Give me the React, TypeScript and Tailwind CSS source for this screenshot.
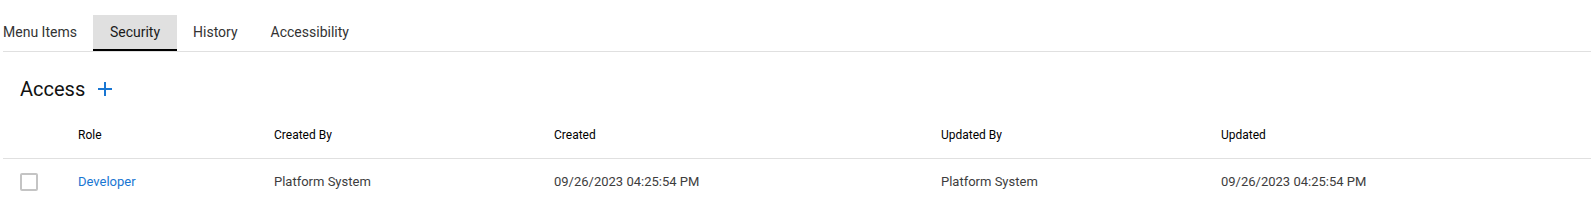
import React from "react";

const tabs = ["Menu Items", "Security", "History", "Accessibility"];

function PlusIcon() {
  return (
    <svg width="24" height="24" viewBox="0 0 24 24" className="fill-[#1976d2]">
      <path d="M19 13h-6v6h-2v-6H5v-2h6V5h2v6h6v2z" />
    </svg>
  );
}

export default function App() {
  return (
    <div
      className="w-[1595px] h-[212px] overflow-hidden bg-white pl-[3px] pr-[4px]"
      style={{ fontFamily: "Roboto, 'Liberation Sans', sans-serif" }}
    >
      <div className="pt-[15px]">
        <div className="flex border-b border-[#e0e0e0]">
          <div className="flex -ml-[16.5px]">
            {tabs.map((t) => {
              const active = t === "Security";
              return (
                <div
                  key={t}
                  className={
                    active
                      ? "h-[36px] px-[16.5px] flex items-center text-[14px] text-[#1a1a1a] bg-[#e0e0e0] border-b-2 border-black pt-[1px]"
                      : "h-[36px] px-[16.5px] flex items-center text-[14px] text-[#333333] border-b-2 border-transparent pt-[1px]"
                  }
                >
                  {t}
                </div>
              );
            })}
          </div>
        </div>
      </div>

      <div className="mt-[25px] h-[24px] flex items-center pl-[17px] gap-[8px]">
        <span className="text-[20px] leading-6 text-[#111111]">Access</span>
        <PlusIcon />
      </div>

      <div className="mt-[10px]">
        <div className="grid grid-cols-[75px_196px_280px_387px_280px_1fr] h-[48px] items-center border-b border-[#e0e0e0] text-[12px] text-black">
          <div />
          <div>Role</div>
          <div>Created By</div>
          <div>Created</div>
          <div>Updated By</div>
          <div>Updated</div>
        </div>
        <div className="grid grid-cols-[75px_196px_280px_387px_280px_1fr] h-[46px] items-center text-[13px] text-[#3d3d3d]">
          <div className="pl-[17px] flex items-center">
            <div className="w-[18px] h-[18px] border-2 border-[#c4c4c4] rounded-[2px] bg-white" />
          </div>
          <div className="text-[#1976d2]">Developer</div>
          <div>Platform System</div>
          <div>09/26/2023 04:25:54 PM</div>
          <div>Platform System</div>
          <div>09/26/2023 04:25:54 PM</div>
        </div>
      </div>
    </div>
  );
}
